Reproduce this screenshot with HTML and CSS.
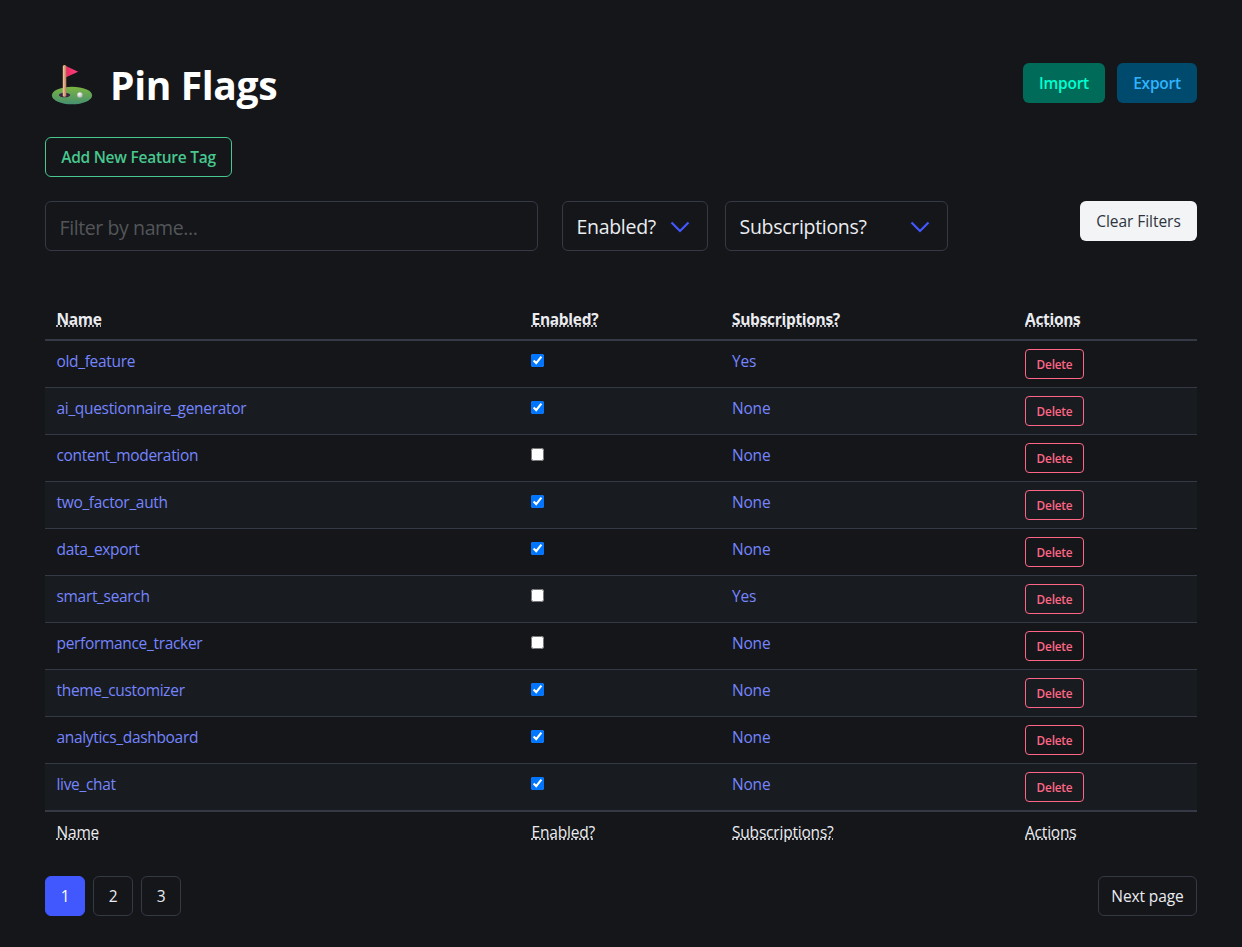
FILE: index.html
```html
<!DOCTYPE html>
<html lang="en">
<head>
<meta charset="utf-8">
<title>Pin Flags</title>
<link rel="stylesheet" href="styles.css">
</head>
<body>
<main class="page">
  <header class="header">
    <div class="brand">
      <svg class="logo" width="42" height="42" viewBox="0 0 48 48">
        <defs>
          <linearGradient id="grass" x1="0" y1="0" x2="0" y2="1"><stop offset="0" stop-color="#7cb440"/><stop offset="1" stop-color="#469070"/></linearGradient>
          <linearGradient id="pole" x1="0" y1="0" x2="1" y2="0"><stop offset="0" stop-color="#f8cda0"/><stop offset="1" stop-color="#b8785c"/></linearGradient>
          <linearGradient id="flag" x1="0" y1="0" x2="1" y2="0"><stop offset="0" stop-color="#e82c62"/><stop offset="1" stop-color="#ff3e7c"/></linearGradient>
          <radialGradient id="ball" cx=".4" cy=".3" r=".8"><stop offset="0" stop-color="#fff"/><stop offset="1" stop-color="#a9a5ac"/></radialGradient>
        </defs>
        <ellipse cx="24" cy="36" rx="23" ry="10" fill="url(#grass)"/>
        <ellipse cx="15.500" cy="35.500" rx="6.500" ry="2.600" fill="#382444"/>
        <path d="M16.500 2 31 8.800 16.500 15.500Z" fill="url(#flag)"/>
        <rect x="13.500" y="1" width="4" height="36.500" rx="1.800" fill="url(#pole)"/>
        <circle cx="33" cy="35.500" r="3.100" fill="url(#ball)"/>
      </svg>
      <h1 class="title">Pin Flags</h1>
    </div>
    <div class="header-actions">
      <button class="button import">Import</button>
      <button class="button export">Export</button>
    </div>
  </header>
  <button class="button add">Add New Feature Tag</button>
  <section class="filters">
    <input class="field name-filter" type="text" placeholder="Filter by name...">
    <div class="field select enabled-filter"><span>Enabled?</span><svg class="chevron" width="20" height="12" viewBox="0 0 20 12"><path d="M1.500 1.500 10 10 18.500 1.500"/></svg></div>
    <div class="field select subs-filter"><span>Subscriptions?</span><svg class="chevron" width="20" height="12" viewBox="0 0 20 12"><path d="M1.500 1.500 10 10 18.500 1.500"/></svg></div>
    <button class="button clear">Clear Filters</button>
  </section>
  <table class="table">
    <colgroup><col class="col-name"><col class="col-enabled"><col class="col-subs"><col class="col-actions"></colgroup>
    <thead><tr><th><abbr>Name</abbr></th><th><abbr>Enabled?</abbr></th><th><abbr>Subscriptions?</abbr></th><th><abbr>Actions</abbr></th></tr></thead>
    <tbody>
      <tr><td><a>old_feature</a></td><td><input class="check" type="checkbox" checked></td><td><a>Yes</a></td><td><button class="delete">Delete</button></td></tr>
      <tr><td><a>ai_questionnaire_generator</a></td><td><input class="check" type="checkbox" checked></td><td><a>None</a></td><td><button class="delete">Delete</button></td></tr>
      <tr><td><a>content_moderation</a></td><td><input class="check" type="checkbox"></td><td><a>None</a></td><td><button class="delete">Delete</button></td></tr>
      <tr><td><a>two_factor_auth</a></td><td><input class="check" type="checkbox" checked></td><td><a>None</a></td><td><button class="delete">Delete</button></td></tr>
      <tr><td><a>data_export</a></td><td><input class="check" type="checkbox" checked></td><td><a>None</a></td><td><button class="delete">Delete</button></td></tr>
      <tr><td><a>smart_search</a></td><td><input class="check" type="checkbox"></td><td><a>Yes</a></td><td><button class="delete">Delete</button></td></tr>
      <tr><td><a>performance_tracker</a></td><td><input class="check" type="checkbox"></td><td><a>None</a></td><td><button class="delete">Delete</button></td></tr>
      <tr><td><a>theme_customizer</a></td><td><input class="check" type="checkbox" checked></td><td><a>None</a></td><td><button class="delete">Delete</button></td></tr>
      <tr><td><a>analytics_dashboard</a></td><td><input class="check" type="checkbox" checked></td><td><a>None</a></td><td><button class="delete">Delete</button></td></tr>
      <tr><td><a>live_chat</a></td><td><input class="check" type="checkbox" checked></td><td><a>None</a></td><td><button class="delete">Delete</button></td></tr>
    </tbody>
    <tfoot><tr><td><abbr>Name</abbr></td><td><abbr>Enabled?</abbr></td><td><abbr>Subscriptions?</abbr></td><td><abbr>Actions</abbr></td></tr></tfoot>
  </table>
  <nav class="pagination">
    <div class="pages"><a class="page-link current">1</a><a class="page-link">2</a><a class="page-link">3</a></div>
    <a class="page-link next">Next page</a>
  </nav>
</main>
</body>
</html>
```

FILE: styles.css
```css
* { box-sizing: border-box; }
html { background: #14161a; }
body {
  margin: 0;
  background: #14161a;
  color: #ebecf0;
  font: 15.5px/24px "Open Sans", "Noto Sans", sans-serif;
  letter-spacing: -0.2px;
}
.page { padding: 61px 45px 0; }
.header { display: flex; justify-content: space-between; align-items: flex-start; height: 76px; }
.brand { display: flex; padding: 3px 0 0 6px; gap: 17px; }
.title { margin: 0; color: #fff; font-size: 39px; line-height: 42px; font-weight: 700; letter-spacing: -0.35px; }
.header-actions { display: flex; gap: 12px; padding-top: 2px; }
.button {
  height: 40px;
  padding: 0 14px;
  border: 1px solid transparent;
  border-radius: 6px;
  font: 600 15.500px/24px "Open Sans", "Noto Sans", sans-serif;
  letter-spacing: -0.25px;
  white-space: nowrap;
}
.import { width: 82px; background: #006b58; color: #00ffd1; }
.export { width: 80px; background: #004a6d; color: #2eb4ff; }
.add { display: block; width: 187px; background: transparent; border-color: #48c78e; color: #48c78e; }
.filters { display: flex; align-items: flex-start; margin-top: 24px; height: 50px; }
.field {
  height: 50px;
  border: 1px solid #353946;
  border-radius: 6px;
  background: #14161a;
  color: #ebecf0;
  font: 19.500px/30px "Open Sans", "Noto Sans", sans-serif;
  letter-spacing: -0.3px;
  padding: 0 14px 0 13.500px;
}
.name-filter { width: 493px; padding-top: 3px; margin-right: 24px; }
.name-filter::placeholder { color: #535558; opacity: 1; letter-spacing: -0.4px; }
.select { display: flex; align-items: center; justify-content: space-between; padding-right: 17px; padding-top: 2px; }
.enabled-filter { width: 146px; margin-right: 17px; }
.subs-filter { width: 223px; }
.chevron { fill: none; stroke: #4258ff; stroke-width: 2.200; }
.clear { width: 117px; margin-left: auto; background: #f3f4f6; color: #2e333d; font-weight: 500; letter-spacing: -0.05px; }
.table { width: 100%; margin-top: 48px; border-spacing: 0; table-layout: fixed; }
.col-name { width: 475px; }
.col-enabled { width: 200px; }
.col-subs { width: 293px; }
.table th, .table td { padding: 8px 12px 8px 11.500px; text-align: left; vertical-align: top; }
.table th:nth-child(n+3), .table td:nth-child(n+3) { padding-left: 12px; }
.table th { height: 42px; font-weight: 700; border-bottom: 2px solid #353946; letter-spacing: -0.3px; }
.table tbody td { height: 47px; border-bottom: 1px solid #353946; }
.table tbody td:first-child { letter-spacing: -0.32px; }
.table tbody tr:nth-child(even) { background: #181b20; }
.table tbody tr:last-child td { height: 48px; border-bottom-width: 2px; }
.table tfoot td { height: 40px; }
.table a { color: #7585ff; }
abbr { text-decoration: underline dotted; }
.check { display: block; width: 13px; height: 13px; margin: 5px 0 0 -0.500px; }
.delete {
  display: block;
  width: 59px;
  height: 30px;
  padding: 0;
  background: transparent;
  border: 1px solid #ff6685;
  border-radius: 4px;
  color: #ff6685;
  font: 600 11.800px/18px "Open Sans", "Noto Sans", sans-serif;
  letter-spacing: -0.2px;
}
.pagination { display: flex; justify-content: space-between; margin-top: 24px; }
.pages { display: flex; gap: 8px; }
.page-link { width: 40px; height: 40px; border: 1px solid #353946; border-radius: 6px; text-align: center; line-height: 39px; }
.current { background: #4258ff; border-color: #4258ff; color: #fff; }
.next { width: 99px; letter-spacing: -0.1px; }
```
